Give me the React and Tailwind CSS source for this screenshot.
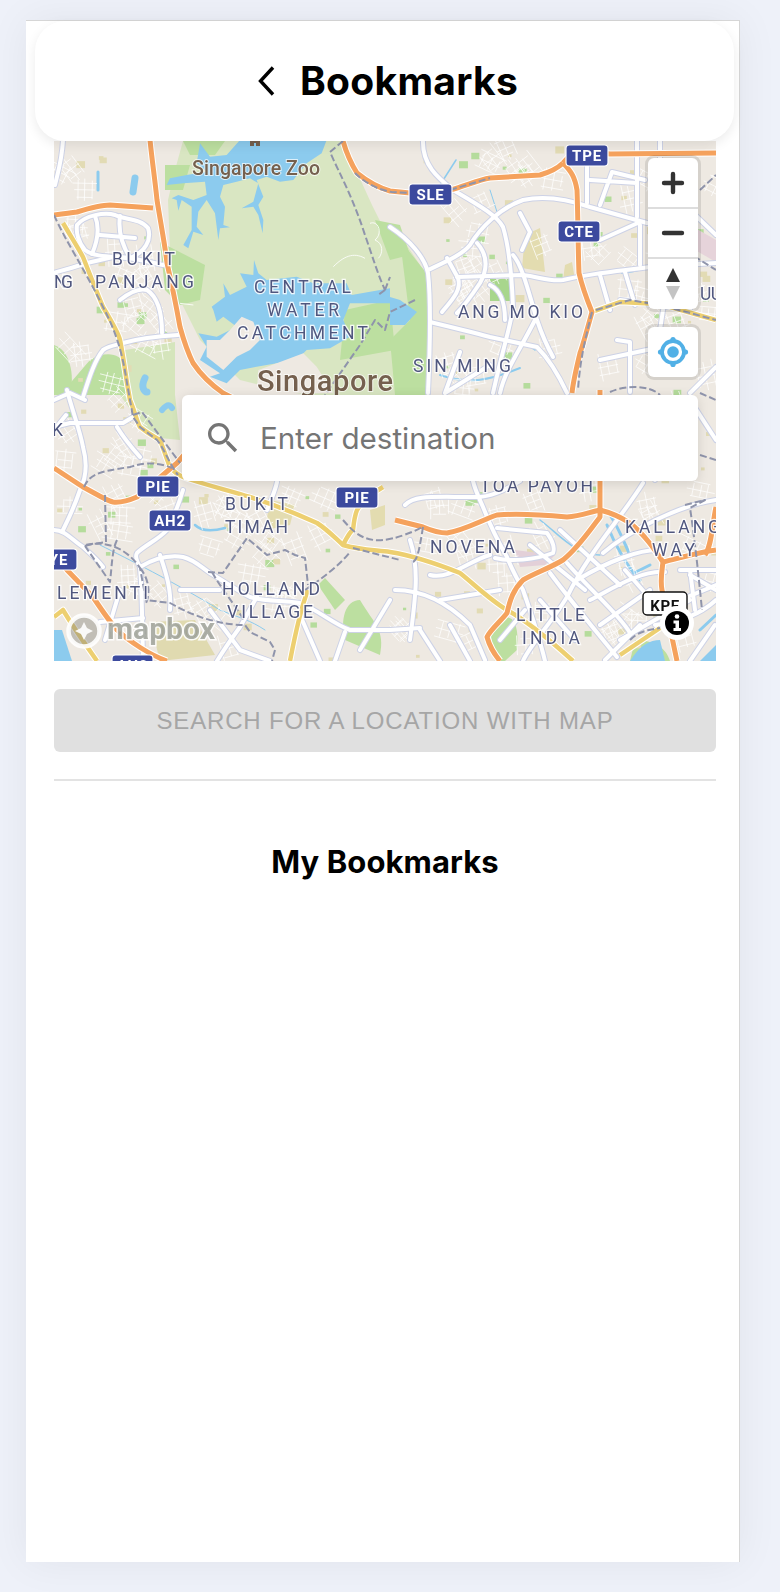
import React from 'react';

const ui = '"Inter", "Noto Sans", sans-serif';
const mapFont = 'Roboto, "Noto Sans", sans-serif';

// thin residential grids, scattered from a fixed seed
let seed = 11;
const rnd = () => {
  seed = (seed * 16807) % 2147483647;
  return seed / 2147483647;
};
const minorAreas = [
  [60, 150, 140, 200, 3], [75, 225, 150, 330, 9], [110, 300, 170, 345, 5], [56, 345, 125, 395, 3],
  [56, 400, 180, 470, 9], [56, 490, 170, 590, 9], [180, 485, 340, 560, 13], [150, 560, 330, 660, 10],
  [400, 145, 560, 185, 7], [440, 200, 560, 300, 12], [590, 165, 716, 260, 9], [600, 270, 716, 392, 11],
  [430, 330, 570, 392, 6], [395, 485, 600, 520, 6], [395, 540, 520, 660, 10], [520, 530, 716, 660, 12],
  [640, 400, 716, 520, 4],
];
const minorStreets = [];
minorAreas.forEach(([x0, y0, x1, y1, n]) => {
  for (let i = 0; i < n; i++) {
    const cx = x0 + rnd() * (x1 - x0);
    const cy = y0 + rnd() * (y1 - y0);
    const a = rnd() * 1.57;
    const c = Math.cos(a);
    const s = Math.sin(a);
    for (let k = -1; k <= 1; k++) {
      const o = k * (6 + rnd() * 3);
      const r = 7 + rnd() * 9;
      const r2 = 5 + rnd() * 7;
      minorStreets.push(`M${(cx + c * -r - s * o).toFixed(1)} ${(cy + s * -r + c * o).toFixed(1)}L${(cx + c * r - s * o).toFixed(1)} ${(cy + s * r + c * o).toFixed(1)}`);
      minorStreets.push(`M${(cx - s * -r2 + c * o).toFixed(1)} ${(cy + c * -r2 + s * o).toFixed(1)}L${(cx - s * r2 + c * o).toFixed(1)} ${(cy + c * r2 + s * o).toFixed(1)}`);
    }
  }
});

const dots = [];
minorAreas.forEach(([x0, y0, x1, y1, n]) => {
  for (let i = 0; i < n; i++) {
    dots.push([x0 + rnd() * (x1 - x0), y0 + rnd() * (y1 - y0), rnd() > 0.55 ? '#b5dc9c' : '#e2dbb4', 3 + rnd() * 6]);
  }
});

const streets = [
  'M63 140C62 160 58 172 55 185',
  'M423 140C422 165 438 178 453 190C475 203 497 215 503 227C510 250 512 280 513 307C511 325 505 340 493 393',
  'M390 227C410 240 425 258 428 273C431 300 430 350 428 393',
  'M428 270C445 262 462 255 470 245C480 228 500 208 523 200C545 195 570 200 590 207L647 223',
  'M457 277L523 275C540 277 550 282 563 280C585 275 600 273 650 267L716 263',
  'M430 322C455 328 475 333 490 337L537 347C550 360 560 378 567 393',
  'M513 255C522 265 528 290 537 320C542 335 548 348 553 357',
  'M477 243C485 252 490 265 480 283C472 295 465 305 457 313',
  'M447 258L458 278C462 290 452 300 442 312M490 285C500 290 505 300 505 320',
  'M520 213L530 232L522 250M535 320C520 350 505 370 500 393M460 352L445 393L490 365',
  'M587 165L587 203M590 180L637 183M637 140L637 217M660 141L660 215M600 205L612 172M612 172L645 180',
  'M617 340L630 342L630 392M690 393L716 367M663 310L660 330M620 300L690 310M600 360L670 345',
  'M600 275L610 310M625 272L635 305M660 268L665 300M690 210L716 235M600 240L640 222M640 225L640 265',
  'M77 225C85 215 105 212 115 215C125 220 140 218 148 228C152 240 145 252 130 258C115 256 95 258 85 250C78 242 76 232 77 225',
  'M95 216C100 228 98 240 92 254M120 216C118 230 122 245 130 258M100 235L135 238',
  'M53 273C65 270 78 266 87 263L113 257C130 257 150 262 163 265',
  'M120 300C130 292 140 288 147 290C156 296 162 310 162 333',
  'M123 343C140 338 160 336 178 335',
  'M83 397C90 375 95 360 103 350C110 345 118 345 123 343',
  'M67 390C72 410 80 430 83 447C88 465 85 480 80 490C75 505 68 520 63 530',
  'M54 530C65 530 72 540 83 547C92 555 98 560 103 567',
  'M54 427L70 423L123 423L133 417',
  'M117 427C125 440 132 448 140 457M54 400L70 393L85 400M66 415L54 430',
  'M140 567C136 560 135 556 137 553C145 545 158 540 167 530C175 515 180 500 183 490',
  'M140 567C155 558 170 555 183 557C195 560 202 568 210 573C225 582 240 592 250 597C265 602 285 600 300 603C318 610 335 625 350 630L390 630L420 628',
  'M140 567C142 590 142 615 143 661',
  'M217 661C225 648 232 638 240 627C247 615 252 605 257 597',
  'M277 482C275 492 270 502 267 510M100 622L143 618M120 590L105 640',
  'M473 481C475 490 480 500 483 507C490 525 500 545 507 557C512 570 518 580 523 590C530 610 540 640 545 661',
  'M497 528L547 533C552 540 555 548 553 553C535 560 510 562 495 558',
  'M405 505C415 495 430 497 473 497C490 498 505 490 520 481',
  'M550 573C570 600 595 630 617 657',
  'M567 563C590 590 620 615 630 633',
  'M643 483C620 520 590 550 567 597C550 625 530 645 523 661',
  'M603 553C630 530 680 505 716 500',
  'M577 580C610 560 640 550 657 550',
  'M395 590C430 590 455 610 470 625L485 660',
  'M655 625C680 622 700 615 716 600M620 640L690 600M680 600L716 585',
  'M640 420L655 480M690 400L716 440',
  'M410 540C420 570 415 600 410 640M430 575C450 580 470 560 490 555M440 600L500 590M390 600L360 650M420 630L440 661M450 625L470 661',
  'M590 600C610 590 640 570 665 572M600 625L650 590M625 570L660 610M540 600L575 640M605 660L640 625M680 570L716 570M690 570L695 610M715 625L690 661',
  'M530 545L585 590M560 530L620 585M500 640L525 610',
  'M690 575L716 590',
  'M210 610L240 650L270 661M300 615L320 661M345 632L335 661',
  'M160 555C165 570 172 590 170 610M180 590L220 590',
];

const yellow = [
  'M63 223C70 235 78 248 83 257C92 280 98 295 103 307C112 322 118 332 120 340C123 355 125 370 127 383L130 400C135 412 137 422 140 427C150 435 155 437 160 440C164 450 167 460 170 467C175 473 178 475 183 477C205 485 228 490 250 497C275 505 295 513 317 523C328 530 335 538 343 545C360 550 375 550 390 552C415 556 440 565 460 573C475 585 490 600 507 610C525 620 550 640 573 661',
  'M343 545C348 535 352 530 353 530C354 520 355 515 357 510C365 498 375 492 383 487',
  'M308 590C300 610 295 635 290 661',
  'M54 617L63 610C75 630 88 648 97 661',
  'M592 312L620 302L660 304L716 320',
  'M620 655L660 628',
];

const orange = [
  'M150 140C152 160 155 180 157 200C161 225 165 245 167 263C172 285 176 305 180 327C185 345 189 355 193 363C203 378 213 386 223 393L260 412',
  'M54 215C62 214 70 213 77 212C90 208 100 205 110 205L153 208',
  'M343 141C347 155 352 165 357 173C368 182 380 188 390 191L410 193L450 190C465 186 478 180 490 178L540 175C550 172 558 168 563 163',
  'M563 163C572 172 575 178 577 190C578 215 578 250 579 273C583 290 588 302 592 312C587 330 583 345 580 353C576 370 573 382 572 393',
  'M563 163L575 150L610 154L716 153',
  'M54 468C65 475 75 482 83 487C95 493 105 500 113 502C122 503 130 500 137 497L177 463L190 448',
  'M395 520L423 527C430 530 440 533 447 533C465 530 482 520 497 515C520 513 545 515 567 517C580 516 590 512 600 510C612 513 622 518 630 523C645 535 655 550 663 562C662 570 660 580 662 590L677 661',
  'M600 390L600 517C590 530 578 548 563 560C550 568 535 573 523 580C513 590 510 600 507 613C500 622 490 630 487 637C490 648 495 655 500 661',
  'M663 562C680 558 700 552 716 550M705 555C712 545 712 525 716 507',
  'M54 555C60 560 63 565 67 570L93 597C103 612 110 622 117 630C130 642 150 655 167 661',
];

const tunnels = [
  'M343 141L330 152C340 175 352 195 365 235C372 255 378 275 385 290M385 290L390 277M385 290L378 295',
  'M415 300L390 312L385 330L375 320L360 345L325 395',
  'M355 173C365 183 378 190 392 192L430 194M450 190L490 178',
  'M54 215C65 240 85 270 103 307C115 330 122 350 127 383L133 417L140 427L157 440C165 450 170 465 178 475',
  'M133 415L142 412L180 463',
  'M84 487C90 475 95 472 130 467C150 460 165 465 172 468M105 495L106 542L85 545',
  'M85 546C100 540 125 545 140 568L146 600L170 603C200 620 225 625 245 625L250 632L270 642L275 650L272 661',
  'M117 540C112 550 112 565 110 582L85 546M140 568C150 580 150 595 146 603',
  'M208 572L223 573L247 538L267 555L285 550L295 555L305 558L308 585M305 590C320 580 340 565 350 552',
  'M212 572C222 590 232 600 245 622',
  'M343 520C360 540 375 550 423 527M423 527C420 545 418 560 413 562',
  'M353 548L400 560',
  'M592 312C585 340 580 360 578 390',
  'M596 310L630 300L660 305L716 320',
  'M660 235L716 270M700 190L716 175',
  'M685 505L705 500L690 508C695 540 700 590 702 610',
  'M630 640C640 630 650 630 660 628',
  'M610 392C625 385 650 385 660 395',
  'M700 393L716 400M700 455L716 460',
];

const greens = [
  'M90 360C115 345 135 360 128 395L60 395Z', 'M54 345C70 350 75 375 70 395L54 395Z', 'M360 600C375 625 385 630 380 655L345 640C340 620 345 600 360 600Z',
  'M490 630C510 605 520 620 517 650L505 661L495 661Z', 'M635 640C650 640 665 645 670 661L630 661Z', 'M318 585L335 610L345 600L325 578Z',
  'M160 242L205 265L200 300L180 305L165 290Z', 'M183 141L225 141L215 155L190 155Z', 'M165 165L190 165L183 190L165 190Z',
  'M345 310L390 300L395 350L340 360Z', 'M375 220L400 225L410 255L390 260Z', 'M400 240L428 275L428 395L395 395L390 340L410 320Z',
];

const waterLines = [
  ['M145 378C140 388 145 392 147 392', 7], ['M162 410C168 403 170 405 172 408', 6],
  ['M195 525C200 530 210 532 225 528', 2.5], ['M100 545C130 560 170 580 220 610C240 618 250 620 265 630', 1],
  ['M440 375C470 385 490 380 520 368', 2], ['M535 350C525 340 510 345 490 338', 1.5], ['M622 273C630 272 640 270 645 268', 2],
  ['M440 185L456 160', 1.5], ['M490 190L498 215', 1], ['M540 520C560 535 575 555 600 555', 1.5],
  ['M607 525C615 545 628 568 640 580', 3], ['M630 575L650 565', 3], ['M610 515C620 530 625 545 630 555', 3], ['M700 630L716 615', 3],
  ['M135 178L133 192', 7], ['M98 172L98 190', 3], ['M70 395L62 395', 1],
];

const badges = [
  ['TPE', 566, 145, 42], ['SLE', 409, 184, 43], ['CTE', 558, 221, 42],
  ['PIE', 137, 476, 42], ['AH2', 149, 510, 42], ['PIE', 336, 487, 42], ['YE', 40, 549, 37], ['AH2', 112, 655, 41],
];

const labels = [
  ['BUKIT', 112, 265, 63], ['PANJANG', 95, 288, 99], ['NG', 54, 288, 19],
  ['CENTRAL', 254, 293, 97], ['WATER', 267, 316, 72], ['CATCHMENT', 237, 339, 131],
  ['ANG MO KIO', 458, 318, 125], ['SIN MING', 413, 372, 98], ['UU', 700, 300, 22],
  ['BUKIT', 225, 510, 63], ['TIMAH', 225, 533, 63], ['HOLLAND', 222, 595, 98], ['VILLAGE', 227, 618, 86],
  ['LEMENTI', 57, 599, 91], ['K', 52, 436, 10],
  ['TOA PAYOH', 480, 492, 113], ['NOVENA', 430, 553, 85], ['KALLANG', 625, 533, 95], ['WAY', 652, 556, 43],
  ['LITTLE', 516, 621, 69], ['INDIA', 522, 644, 58],
];

function MapLabel({ text, x, y, w }) {
  return (
    <text x={x} y={y} textLength={w} lengthAdjust="spacing" fontFamily={mapFont} fontSize="17.5" fill="#50577f" stroke="#fff" strokeWidth="2.5" strokeOpacity="0.85" paintOrder="stroke">
      {text}
    </text>
  );
}

function MapDrawing() {
  return (
    <svg viewBox="54 141 662 520" className="block w-full h-full blur-[0.5px]">
      <rect x="54" y="141" width="662" height="520" fill="#eee9e2" />
      <path d="M183 141L343 141L356 170L372 205L382 225L400 235L420 265L425 300L428 340L420 395L305 395L280 390L240 380L200 340L180 300L170 250L168 200L175 170Z" fill="#d9e6c2" />
      <path d="M125 350L175 342L175 395L180 440L150 437L120 395Z" fill="#d5e5bc" />
      {greens.map((d, i) => <path key={i} d={d} fill="#bcdfa0" />)}
      {dots.map(([x, y, c, s], i) => <rect key={i} x={x} y={y} width={s} height={s * 0.8} fill={c} />)}
      <rect x="490" y="279" width="20" height="22" fill="#a8d68c" />
      <path d="M525 235L540 228L545 272L522 268Z" fill="#e3dcb0" />
      <path d="M565 265L572 262L575 280L563 280Z" fill="#e3dcb0" />
      <path d="M515 550L555 555L545 565L520 567Z" fill="#e3d0d8" />
      <path d="M690 225L716 240L716 262L695 250Z" fill="#e6d3da" />
      <path d="M150 622L195 620L215 655L160 661Z" fill="#e0dab0" />
      <path d="M270 500L295 505L290 525L265 530Z" fill="#e3dcb0" />
      <path d="M370 510L385 505L385 525L372 530Z" fill="#e3dcb0" />

      <g transform="translate(50 140) scale(0.33333)">
        <path fill="#8ccbee" d="M570 0L830 0L815 40L770 70L730 120L690 125L650 110L620 120L640 170L625 195L640 240L638 280L625 225L610 200L575 205L610 185L625 130L600 115L560 125L520 135L510 170L525 200L520 255L540 262L510 265L505 300L495 220L470 180L445 215L440 260L460 285L430 275L415 325L400 315L425 270L425 200L395 180L385 212L380 180L365 175L385 165L430 180L470 165L465 125L400 130L350 135L360 115L410 105L470 95L440 70L450 10L480 50L530 45Z" />
        <path fill="#8ccbee" d="M485 500L525 470L520 430L540 465L590 440L570 400L610 405L612 360L625 400L650 420L740 410L790 430L890 430L905 465L1020 445L1020 490L960 490L900 490L880 540L900 590L840 625L770 630L740 660L680 670L620 680L570 690L530 730L480 710L510 700L450 660L470 620L445 580L500 590L560 560L520 530L500 545L490 510Z" />
        <path fill="#eee9e2" d="M470 600L510 600L540 570L575 530L610 545L630 600L600 630L560 650L520 690L470 650Z" />
        <path fill="#eee9e2" d="M625 690L680 670L760 640L800 680L850 760L620 760Z" />
        <path fill="none" stroke="#fff" strokeWidth="2.5" d="M850 380C880 350 910 335 945 355M960 250C985 240 1000 280 975 300C1000 310 1000 340 985 355M390 490L430 495" />
      </g>
      {waterLines.map(([d, w], i) => <path key={i} d={d} fill="none" stroke="#8ccbee" strokeWidth={w} strokeLinecap="round" />)}
      <path d="M630 661C640 645 650 640 660 640L665 661Z" fill="#8ccbee" />
      <path d="M54 630L62 630L72 661L54 661Z" fill="#8ccbee" />
      <path d="M700 661L716 645L716 661Z" fill="#8ccbee" />
      <path d="M390 297L400 300L417 312L405 325L390 325Z" fill="#8ccbee" />

      <path d={minorStreets.join('')} fill="none" stroke="#fff" strokeWidth="1" strokeOpacity="0.75" />
      {streets.map((d, i) => <path key={i} d={d} fill="none" stroke="#cdd2e6" strokeWidth="6" strokeLinecap="round" strokeLinejoin="round" />)}
      {streets.map((d, i) => <path key={i} d={d} fill="none" stroke="#fff" strokeWidth="4" strokeLinecap="round" strokeLinejoin="round" />)}
      {yellow.map((d, i) => <path key={i} d={d} fill="none" stroke="#fff" strokeWidth="6.5" strokeLinejoin="round" />)}
      {yellow.map((d, i) => <path key={i} d={d} fill="none" stroke="#edcf70" strokeWidth="4.5" strokeLinejoin="round" />)}
      {orange.map((d, i) => <path key={i} d={d} fill="none" stroke="#fff" strokeWidth="7" strokeLinejoin="round" />)}
      {orange.map((d, i) => <path key={i} d={d} fill="none" stroke="#f5a25d" strokeWidth="5" strokeLinejoin="round" />)}
      {tunnels.map((d, i) => <path key={i} d={d} fill="none" stroke="#8f94ab" strokeWidth="2" strokeDasharray="7 3" strokeLinejoin="round" />)}

      <text x="192" y="175" fontFamily={mapFont} fontWeight="500" fontSize="19.5" fill="#75604e" stroke="#fff" strokeWidth="2" strokeOpacity="0.7" paintOrder="stroke" textLength="128" lengthAdjust="spacing">Singapore Zoo</text>
      <path d="M250 141L250 146L254 146L254 143L256 143L256 146L260 146L260 141Z" fill="#75604e" />
      <text x="257" y="391" textLength="136" lengthAdjust="spacing" fontFamily={mapFont} fontWeight="500" fontSize="29" fill="#75604e" stroke="#fff" strokeWidth="2" strokeOpacity="0.7" paintOrder="stroke">Singapore</text>
      {labels.map(([t, x, y, w], i) => <MapLabel key={i} text={t} x={x} y={y} w={w} />)}

      {badges.map(([t, x, y, w], i) => (
        <g key={i}>
          <rect x={x} y={y} width={w} height="21" rx="3.5" fill="#3c4a9e" stroke="#fff" strokeWidth="1.2" />
          <text x={x + w / 2} y={y + 16} textAnchor="middle" fontFamily={mapFont} fontWeight="700" fontSize="15" letterSpacing="0.8" fill="#fff">{t}</text>
        </g>
      ))}

      <rect x="643" y="592" width="44" height="23" rx="4" fill="#fff" stroke="#111" strokeWidth="1.4" />
      <text x="665" y="611" textAnchor="middle" fontFamily={mapFont} fontWeight="700" fontSize="15" letterSpacing="0.6" fill="#111">KPE</text>

      <circle cx="84" cy="631" r="15.5" fill="#8a8a80" fillOpacity="0.45" stroke="#fff" strokeOpacity="0.9" strokeWidth="4.5" />
      <path d="M84 622L87 628L93 631L87 634L84 640L81 634L75 631L81 628Z" fill="#fff" fillOpacity="0.9" />
      <text x="107" y="639" textLength="108" lengthAdjust="spacingAndGlyphs" fontFamily={mapFont} fontWeight="700" fontSize="29" fill="#8a8f84" fillOpacity="0.7" stroke="#fff" strokeWidth="2.8" strokeOpacity="0.9" paintOrder="stroke">mapbox</text>

      <circle cx="677" cy="623" r="17" fill="#fff" />
      <circle cx="677" cy="623" r="12" fill="#000" />
      <circle cx="677" cy="616.5" r="2.3" fill="#fff" />
      <path d="M673.5 620.5H679V628H681V631H673.5V628H675.5V623.5H673.5Z" fill="#fff" />
    </svg>
  );
}

function MapControls() {
  return (
    <div className="absolute left-[594px] top-[17px] flex flex-col gap-[18px]">
      <div className="w-[50px] rounded-[6px] bg-white shadow-[0_0_0_3px_rgba(0,0,0,0.1)] flex flex-col">
        <div className="h-[51px] flex items-center justify-center border-b-2 border-[#dddddd]">
          <svg width="24" height="24" viewBox="0 0 24 24"><path d="M12 3V21M3 12H21" stroke="#333" strokeWidth="4.4" strokeLinecap="round" /></svg>
        </div>
        <div className="h-[50px] flex items-center justify-center border-b-2 border-[#dddddd]">
          <svg width="24" height="24" viewBox="0 0 24 24"><path d="M3 12H21" stroke="#333" strokeWidth="4.4" strokeLinecap="round" /></svg>
        </div>
        <div className="h-[50px] flex items-center justify-center">
          <svg width="16" height="34" viewBox="0 0 16 34"><path d="M8 1L15 15H1Z" fill="#333" /><path d="M8 33L15 19H1Z" fill="#c4c4c4" /></svg>
        </div>
      </div>
      <div className="w-[50px] h-[50px] rounded-[6px] bg-white shadow-[0_0_0_3px_rgba(0,0,0,0.1)] flex items-center justify-center">
        <svg width="32" height="32" viewBox="0 0 32 32">
          <circle cx="16" cy="16" r="11" fill="none" stroke="#51b0e6" strokeWidth="3.8" />
          <circle cx="16" cy="16" r="5.8" fill="#51b0e6" />
          <circle cx="16" cy="3.5" r="2.6" fill="#51b0e6" />
          <circle cx="16" cy="28.5" r="2.6" fill="#51b0e6" />
          <circle cx="3.5" cy="16" r="2.6" fill="#51b0e6" />
          <circle cx="28.5" cy="16" r="2.6" fill="#51b0e6" />
        </svg>
      </div>
    </div>
  );
}

function SearchBox() {
  return (
    <div className="absolute left-[128px] top-[254px] w-[516px] h-[86px] bg-white rounded-[6px] shadow-[0_2px_12px_rgba(0,0,0,0.12)] flex items-center pl-[21px]">
      <svg width="40" height="40" viewBox="0 0 24 24" fill="#757575">
        <path d="M15.5 14h-.79l-.28-.27C15.41 12.59 16 11.11 16 9.5 16 5.91 13.09 3 9.5 3S3 5.91 3 9.5 5.91 16 9.5 16c1.61 0 3.09-.59 4.23-1.57l.27.28v.79l5 4.99L20.49 19l-4.99-5zm-6 0C7.01 14 5 11.99 5 9.5S7.01 5 9.5 5 14 7.01 14 9.5 11.99 14 9.5 14z" />
      </svg>
      <span className="ml-[17px] text-[29.6px] text-[#757575]" style={{ fontFamily: ui }}>Enter destination</span>
    </div>
  );
}

export default function App() {
  return (
    <div className="h-[1592px] bg-[#eef1f9] pt-[20px] pl-[26px] overflow-hidden">
      <div className="w-[714px] h-[1542px] bg-white border-t border-r border-[#d6d6d6] shadow-[0_0_40px_rgba(0,0,0,0.06)]">
        <div className="relative z-10 ml-[9px] w-[699px] h-[120px] pl-[6px] bg-white rounded-[30px] shadow-[0_4px_12px_rgba(0,0,0,0.08)] flex items-center justify-center" style={{ fontFamily: ui }}>
          <svg width="20" height="30" viewBox="0 0 20 30" className="mr-[23px]">
            <path d="M16 1.5L3.5 15L16 28.5" fill="none" stroke="#000" strokeWidth="3.4" />
          </svg>
          <h1 className="text-[39px] font-bold text-black tracking-[0.3px]">Bookmarks</h1>
        </div>
        <div className="pl-[28px] pr-[23px]">
          <div className="relative h-[520px] overflow-hidden">
            <MapDrawing />
            <MapControls />
            <SearchBox />
          </div>
          <button className="mt-[28px] w-full h-[63px] rounded-[6px] bg-[#e0e0e0] text-[#a6a6a6] text-[24px] tracking-[0.85px]" style={{ fontFamily: '"Liberation Sans", sans-serif' }}>
            SEARCH FOR A LOCATION WITH MAP
          </button>
          <div className="mt-[27px] h-[2px] bg-[#e3e3e3]" />
          <h2 className="mt-[58px] text-center text-[31px] font-bold text-black tracking-[0.1px]" style={{ fontFamily: ui }}>My Bookmarks</h2>
        </div>
      </div>
    </div>
  );
}
